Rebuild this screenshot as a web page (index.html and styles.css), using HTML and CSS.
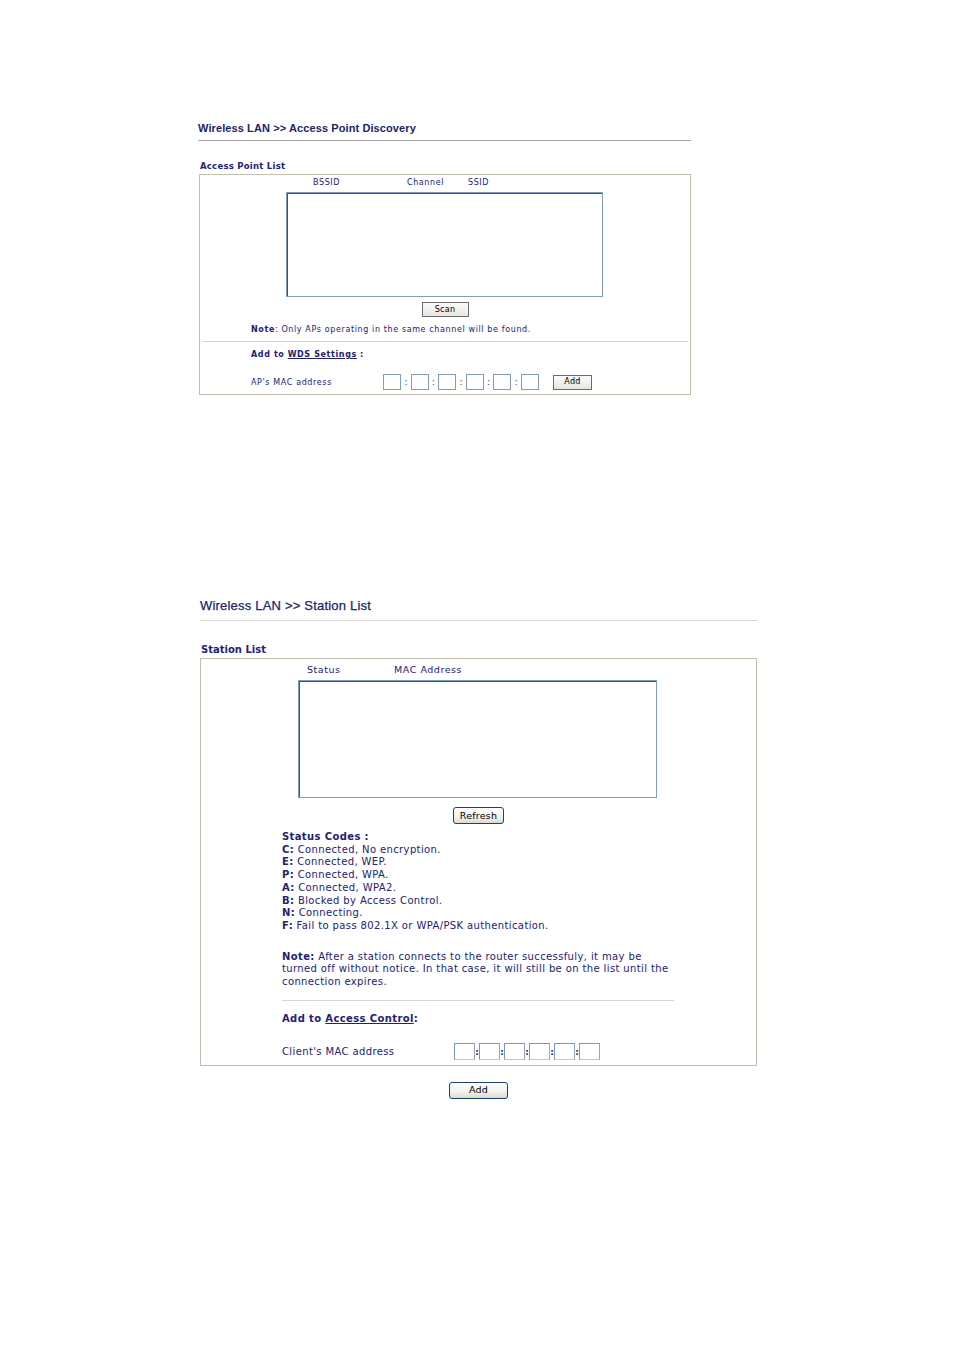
FILE: index.html
```html
<!DOCTYPE html>
<html>
<head>
<meta charset="utf-8">
<title>Wireless LAN</title>
<link rel="stylesheet" href="styles.css">
</head>
<body>
<div class="page">
  <section class="panel p1">
    <h1 class="title t1">Wireless LAN &gt;&gt; Access Point Discovery</h1>
    <div class="caption c1">Access Point List</div>
    <div class="box b1">
      <div class="cols cols1">
        <span class="col-bssid">BSSID</span>
        <span class="col-channel">Channel</span>
        <span>SSID</span>
      </div>
      <div class="listbox lb1"></div>
      <div class="btnrow btnrow1"><button class="btn btn-flat scan">Scan</button></div>
      <div class="note1"><b>Note</b>: Only APs operating in the same channel will be found.</div>
      <div class="sep sep1"></div>
      <div class="addto1"><b>Add to</b> <a class="link" href="#">WDS Settings</a> <b>:</b></div>
      <div class="macrow macrow1">
        <span class="maclabel1">AP's MAC address</span>
        <span class="macin1"></span><span class="colon1">:</span>
        <span class="macin1"></span><span class="colon1">:</span>
        <span class="macin1"></span><span class="colon1">:</span>
        <span class="macin1"></span><span class="colon1">:</span>
        <span class="macin1"></span><span class="colon1">:</span>
        <span class="macin1"></span>
        <button class="btn btn-flat add1">Add</button>
      </div>
    </div>
  </section>

  <section class="panel p2">
    <h1 class="title t2">Wireless LAN &gt;&gt; Station List</h1>
    <div class="caption c2">Station List</div>
    <div class="box b2">
      <div class="cols cols2">
        <span class="col-status">Status</span>
        <span>MAC Address</span>
      </div>
      <div class="listbox lb2"></div>
      <div class="btnrow btnrow2"><button class="btn btn-xp refresh">Refresh</button></div>
      <div class="codes">
        <div><b>Status Codes :</b></div>
        <div><b>C:</b> Connected, No encryption.</div>
        <div><b>E:</b> Connected, WEP.</div>
        <div><b>P:</b> Connected, WPA.</div>
        <div><b>A:</b> Connected, WPA2.</div>
        <div><b>B:</b> Blocked by Access Control.</div>
        <div><b>N:</b> Connecting.</div>
        <div><b>F:</b> Fail to pass 802.1X or WPA/PSK authentication.</div>
      </div>
      <div class="note2"><b>Note:</b> After a station connects to the router successfuly, it may be<br>turned off without notice. In that case, it will still be on the list until the<br>connection expires.</div>
      <div class="sep sep2"></div>
      <div class="addto2"><b>Add to <a class="link" href="#">Access Control</a>:</b></div>
      <div class="macrow macrow2">
        <span class="maclabel2">Client's MAC address</span>
        <span class="macin2"></span><span class="colon2">:</span>
        <span class="macin2"></span><span class="colon2">:</span>
        <span class="macin2"></span><span class="colon2">:</span>
        <span class="macin2"></span><span class="colon2">:</span>
        <span class="macin2"></span><span class="colon2">:</span>
        <span class="macin2"></span>
      </div>
    </div>
    <div class="btnrow btnrow3"><button class="btn btn-xp add2">Add</button></div>
  </section>
</div>
</body>
</html>
```

FILE: styles.css
```css
html, body {
  margin: 0;
  padding: 0;
  background: #ffffff;
}
body {
  font-family: "DejaVu Sans", Verdana, sans-serif;
  color: #22226e;
}
.page {
  padding-top: 121px;
}
.panel {
  display: flex;
  flex-direction: column;
}
.p1 {
  margin-left: 198px;
  width: 493px;
}
.p2 {
  margin-left: 200px;
  width: 557px;
  margin-top: 203px;
}
.title {
  margin: 0;
  font-family: "Liberation Sans", Arial, sans-serif;
  color: #1c2468;
}
.t1 {
  font-size: 11px;
  font-weight: bold;
  line-height: 14px;
  padding-bottom: 5px;
  border-bottom: 1px solid #a4a4a4;
  letter-spacing: 0.1px;
}
.t2 {
  font-size: 13px;
  font-weight: normal;
  line-height: 16px;
  padding-bottom: 6px;
  border-bottom: 1px solid #d6d6d6;
  letter-spacing: 0.2px;
  -webkit-text-stroke: 0.25px #1c2468;
}
.caption {
  font-weight: bold;
}
.c1 {
  font-size: 8.5px;
  line-height: 12px;
  margin-top: 19px;
  margin-left: 2px;
  margin-bottom: 2px;
  letter-spacing: 0.25px;
}
.c2 {
  font-size: 10px;
  line-height: 13px;
  margin-top: 22px;
  margin-left: 1px;
  margin-bottom: 2px;
}
.box {
  border: 1px solid #c2bfae;
  display: flex;
  flex-direction: column;
}
.b1 {
  margin-left: 1px;
  font-size: 8px;
  letter-spacing: 0.62px;
  padding-bottom: 4px;
}
.b2 {
  font-size: 10px;
  letter-spacing: 0.38px;
  padding-bottom: 5px;
}
.cols {
  display: flex;
}
.cols1 {
  line-height: 12px;
  padding-top: 2px;
  padding-left: 113px;
  font-size: 8px;
  letter-spacing: 0.6px;
}
.col-bssid { width: 94px; }
.col-channel { width: 61px; }
.cols2 {
  line-height: 13px;
  padding-top: 4px;
  padding-left: 106px;
  font-size: 9.5px;
  letter-spacing: 0.55px;
}
.col-status { width: 87px; }
.listbox {
  background: #fff;
  border: 1px solid #7f9db9;
  box-shadow: inset 1px 1px 0 #55503f;
  box-sizing: border-box;
}
.lb1 {
  margin-top: 3px;
  margin-left: 86px;
  width: 317px;
  height: 105px;
}
.lb2 {
  margin-top: 4px;
  margin-left: 97px;
  width: 359px;
  height: 118px;
}
.btnrow {
  display: flex;
  justify-content: center;
}
.btnrow1 { margin-top: 5px; }
.btnrow2 { margin-top: 9px; }
.btnrow3 { margin-top: 16px; }
.btn {
  font-family: "DejaVu Sans", Verdana, sans-serif;
  color: #000;
  padding: 0;
  margin: 0;
  box-sizing: border-box;
}
.btn-flat {
  border: 1px solid #6b6b6b;
  background: linear-gradient(#fbfbf9, #e6e5df);
  font-size: 8px;
  line-height: 12px;
  letter-spacing: 0.3px;
}
.scan {
  width: 47px;
  height: 15px;
}
.add1 {
  width: 39px;
  height: 15px;
  margin-left: 14px;
}
.btn-xp {
  border: 1px solid #1f3f6e;
  border-radius: 3px;
  background: linear-gradient(#ffffff, #f2f1ec 60%, #dcdad0);
  font-size: 9.5px;
  line-height: 14px;
  letter-spacing: 0.2px;
}
.refresh {
  width: 51px;
  height: 17px;
}
.add2 {
  width: 59px;
  height: 17px;
}
.note1 {
  margin-top: 7px;
  padding-left: 51px;
  line-height: 12px;
}
.sep {
  height: 1px;
  background: #d3d1c6;
}
.sep1 {
  margin: 5px 2px 0 3px;
}
.addto1 {
  margin-top: 7px;
  padding-left: 51px;
  line-height: 12px;
}
.link {
  color: #22226e;
  text-decoration: underline;
  font-weight: bold;
}
.macrow {
  display: flex;
  align-items: center;
}
.macrow1 {
  margin-top: 13px;
  padding-left: 51px;
  height: 16px;
}
.maclabel1 {
  width: 132px;
}
.macin1 {
  width: 18px;
  height: 16px;
  border: 1px solid #7f9db9;
  box-sizing: border-box;
  background: #fff;
}
.colon1 {
  width: 9.6px;
  text-align: center;
  font-size: 8px;
  letter-spacing: 0;
}
.codes {
  margin-top: 7px;
  padding-left: 81px;
  line-height: 12.7px;
}
.note2 {
  margin-top: 18px;
  padding-left: 81px;
  line-height: 12.7px;
}
.sep2 {
  margin: 11px 0 0 81px;
  width: 392px;
  background: #d8d6cc;
}
.addto2 {
  margin-top: 11px;
  padding-left: 81px;
  line-height: 13px;
}
.macrow2 {
  margin-top: 18px;
  padding-left: 81px;
  height: 17px;
}
.maclabel2 {
  width: 172px;
}
.macin2 {
  width: 21px;
  height: 17px;
  border: 1px solid #7b98b8;
  border-bottom-color: #b7c8dc;
  border-right-color: #8ea7c3;
  box-sizing: border-box;
  background: #fff;
}
.colon2 {
  width: 4px;
  font-size: 9px;
  font-weight: bold;
  text-align: center;
  line-height: 17px;
  padding-top: 3px;
  letter-spacing: 0;
}
```
